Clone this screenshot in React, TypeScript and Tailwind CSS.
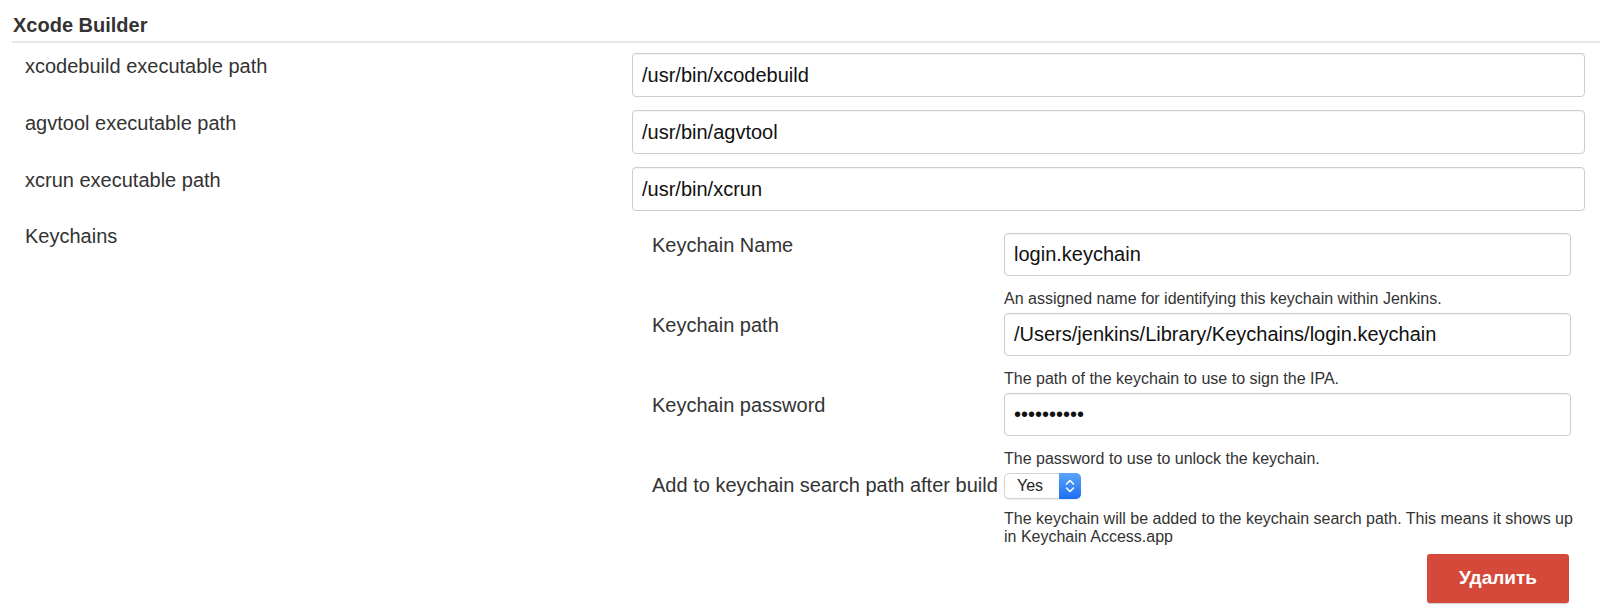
const tools = [
  { label: "xcodebuild executable path", value: "/usr/bin/xcodebuild" },
  { label: "agvtool executable path", value: "/usr/bin/agvtool" },
  { label: "xcrun executable path", value: "/usr/bin/xcrun" },
];

const keychainFields = [
  {
    label: "Keychain Name",
    value: "login.keychain",
    help: "An assigned name for identifying this keychain within Jenkins.",
  },
  {
    label: "Keychain path",
    value: "/Users/jenkins/Library/Keychains/login.keychain",
    help: "The path of the keychain to use to sign the IPA.",
  },
  {
    label: "Keychain password",
    value: "••••••••••",
    help: "The password to use to unlock the keychain.",
  },
];

function TextBox({ value, className }: { value: string; className: string }) {
  return (
    <input
      readOnly
      value={value}
      className={
        "block rounded-[4px] border border-[#cdcdcd] bg-white pl-[9px] text-[20px] text-[#111] shadow-[inset_0_1px_1px_rgba(0,0,0,0.05)] outline-none " +
        className
      }
    />
  );
}

export default function App() {
  return (
    <div className="h-[616px] w-[1600px] bg-white font-['Liberation_Sans',Arial,sans-serif] text-[#333]">
      <h1 className="pl-[13px] pt-[14px] text-[20px] font-bold leading-[23px] text-[#333]">
        Xcode Builder
      </h1>
      <div className="ml-[12px] mt-[4px] h-[2px] bg-[#e8e8e8]" />

      <div className="mt-[10px] flex flex-col gap-[13px]">
        {tools.map((t) => (
          <div className="flex items-start" key={t.label}>
            <div className="w-[632px] shrink-0 pl-[25px] pt-[1px] text-[20px] leading-[24px]">
              {t.label}
            </div>
            <TextBox value={t.value} className="h-[44px] w-[953px]" />
          </div>
        ))}
      </div>

      <div className="mt-[13px] flex items-start">
        <div className="w-[632px] shrink-0 pl-[25px] text-[20px] leading-[24px]">
          Keychains
        </div>
        <div className="flex flex-col pt-[9px]">
          {keychainFields.map((f) => (
            <div className="mb-[5px] flex items-start" key={f.label}>
              <div className="w-[372px] shrink-0 pl-[20px] text-[20px] leading-[24px]">
                {f.label}
              </div>
              <div className="w-[567px]">
                <TextBox value={f.value} className="h-[43px] w-[567px]" />
                <p className="mt-[14px] text-[16px] leading-[18px] text-[#333]">
                  {f.help}
                </p>
              </div>
            </div>
          ))}

          <div className="flex items-start">
            <div className="w-[372px] shrink-0 pl-[20px] text-[20px] leading-[24px]">
              Add to keychain search path after build
            </div>
            <div className="w-[567px]">
              <div className="flex h-[26px] w-[77px] items-stretch rounded-[5px] border border-[#d4d4d4] bg-white shadow-[0_1px_1px_rgba(0,0,0,0.08)]">
                <span className="flex-1 pl-[12px] text-[16px] leading-[24px] text-[#222]">
                  Yes
                </span>
                <span className="-my-px -mr-px flex w-[22px] items-center justify-center rounded-r-[5px] bg-gradient-to-b from-[#5aa3fb] to-[#1a6ff2]">
                  <svg width="10" height="16" viewBox="0 0 10 16" fill="none">
                    <path
                      d="M1.5 6 L5 2.5 L8.5 6 M1.5 10 L5 13.5 L8.5 10"
                      stroke="white"
                      strokeWidth="1.6"
                      strokeLinecap="round"
                      strokeLinejoin="round"
                    />
                  </svg>
                </span>
              </div>
              <p className="mt-[11px] w-[578px] text-[16px] leading-[18px] text-[#333]">
                The keychain will be added to the keychain search path. This means it shows up
                in Keychain Access.app
              </p>
              <div className="mt-[8px] flex justify-end pr-[2px]">
                <button className="h-[49px] w-[142px] rounded-[3px] bg-[#d4493a] text-[19px] font-bold text-white shadow-[0_1px_1px_rgba(0,0,0,0.2)]">
                  Удалить
                </button>
              </div>
            </div>
          </div>
        </div>
      </div>
    </div>
  );
}
